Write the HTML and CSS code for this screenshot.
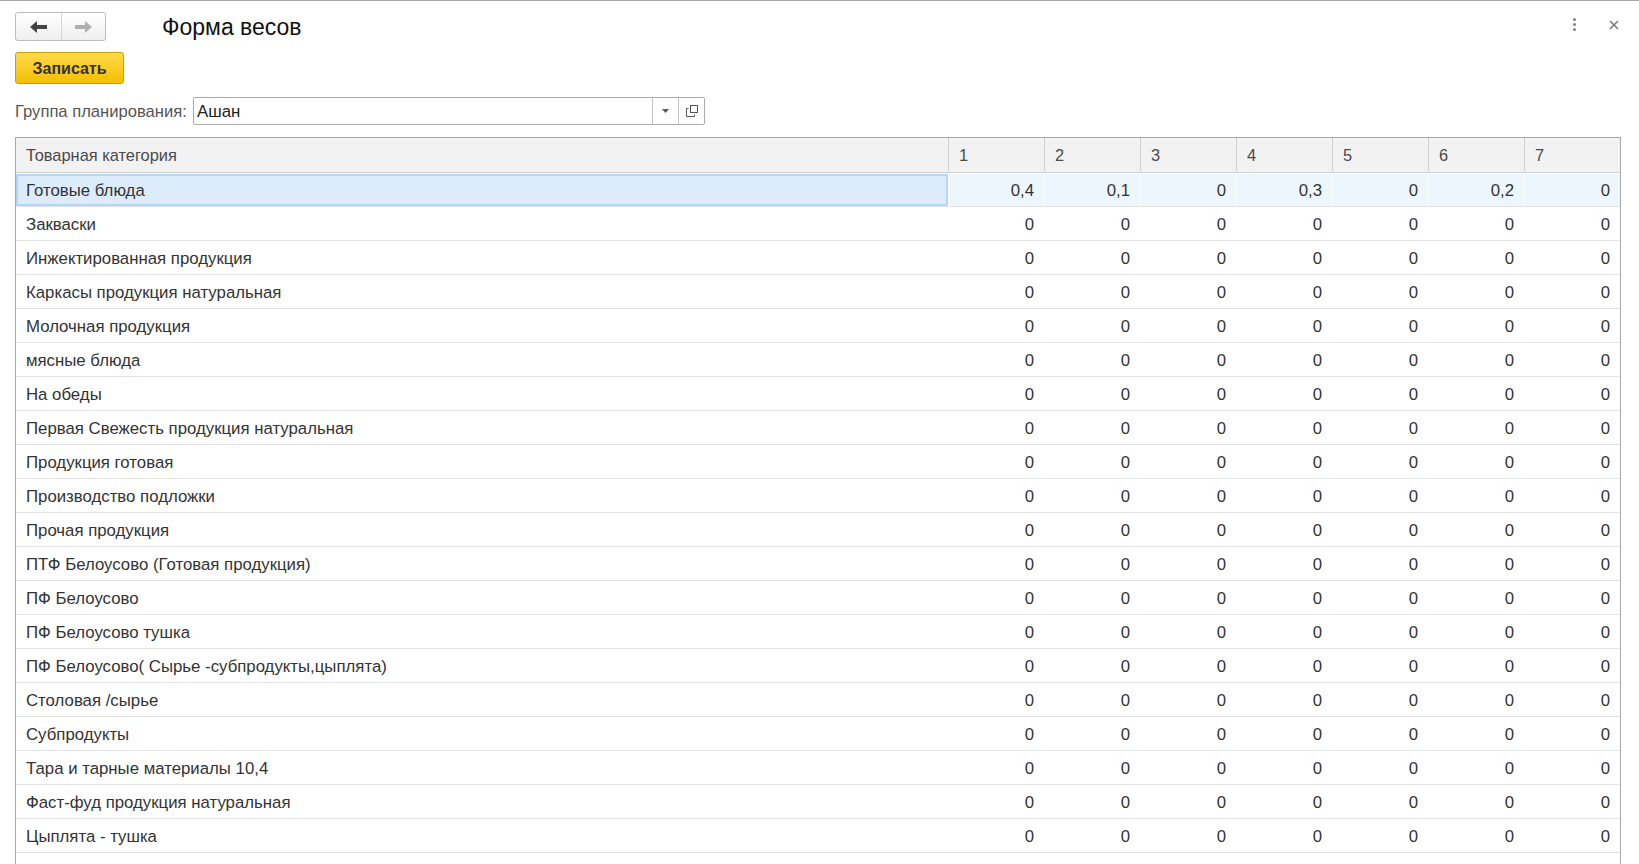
FILE: index.html
```html
<!DOCTYPE html>
<html lang="ru">
<head>
<meta charset="utf-8">
<title>Форма весов</title>
<link rel="stylesheet" href="styles.css">
</head>
<body>
<div class="window">
  <div class="titlebar">
    <div class="nav">
      <button class="nav-btn back" type="button">
        <svg width="17" height="12" viewBox="0 0 17 12"><polygon points="0,6 7,0 7,4 17,4 17,8 7,8 7,12" fill="#444"/></svg>
      </button>
      <button class="nav-btn fwd" type="button">
        <svg width="17" height="12" viewBox="0 0 17 12"><polygon points="17,6 10,0 10,4 0,4 0,8 10,8 10,12" fill="#b0b0b0"/></svg>
      </button>
    </div>
    <h1 class="title">Форма весов</h1>
    <div class="win-tools">
      <span class="kebab"><i></i><i></i><i></i></span>
      <svg class="close" width="10" height="10" viewBox="0 0 10 10"><path d="M1 1L9 9M9 1L1 9" stroke="#7a7a7a" stroke-width="1.6"/></svg>
    </div>
  </div>
  <div class="toolbar">
    <button class="save" type="button">Записать</button>
  </div>
  <div class="field-row">
    <span class="field-label">Группа планирования:</span>
    <div class="input">
      <span class="input-text">Ашан</span>
      <span class="input-btn drop"><svg width="7" height="4" viewBox="0 0 7 4"><polygon points="0,0 7,0 3.5,4" fill="#555"/></svg></span>
      <span class="input-btn open"><svg width="12" height="12" viewBox="0 0 12 12"><rect x="4.5" y="0.5" width="7" height="7" fill="none" stroke="#555"/><path d="M2.5 3.5H0.5V11.5H8.5V9.5" fill="none" stroke="#555"/></svg></span>
    </div>
  </div>
  <div class="grid">
    <table class="tbl">
      <colgroup><col class="c-name"><col class="c-num"><col class="c-num"><col class="c-num"><col class="c-num"><col class="c-num"><col class="c-num"><col class="c-num"></colgroup>
      <thead>
        <tr><th>Товарная категория</th><th>1</th><th>2</th><th>3</th><th>4</th><th>5</th><th>6</th><th>7</th></tr>
      </thead>
      <tbody>
        <tr class="sel"><td>Готовые блюда</td><td>0,4</td><td>0,1</td><td>0</td><td>0,3</td><td>0</td><td>0,2</td><td>0</td></tr>
        <tr><td>Закваски</td><td>0</td><td>0</td><td>0</td><td>0</td><td>0</td><td>0</td><td>0</td></tr>
        <tr><td>Инжектированная продукция</td><td>0</td><td>0</td><td>0</td><td>0</td><td>0</td><td>0</td><td>0</td></tr>
        <tr><td>Каркасы продукция натуральная</td><td>0</td><td>0</td><td>0</td><td>0</td><td>0</td><td>0</td><td>0</td></tr>
        <tr><td>Молочная продукция</td><td>0</td><td>0</td><td>0</td><td>0</td><td>0</td><td>0</td><td>0</td></tr>
        <tr><td>мясные блюда</td><td>0</td><td>0</td><td>0</td><td>0</td><td>0</td><td>0</td><td>0</td></tr>
        <tr><td>На обеды</td><td>0</td><td>0</td><td>0</td><td>0</td><td>0</td><td>0</td><td>0</td></tr>
        <tr><td>Первая Свежесть продукция натуральная</td><td>0</td><td>0</td><td>0</td><td>0</td><td>0</td><td>0</td><td>0</td></tr>
        <tr><td>Продукция готовая</td><td>0</td><td>0</td><td>0</td><td>0</td><td>0</td><td>0</td><td>0</td></tr>
        <tr><td>Производство подложки</td><td>0</td><td>0</td><td>0</td><td>0</td><td>0</td><td>0</td><td>0</td></tr>
        <tr><td>Прочая продукция</td><td>0</td><td>0</td><td>0</td><td>0</td><td>0</td><td>0</td><td>0</td></tr>
        <tr><td>ПТФ Белоусово (Готовая продукция)</td><td>0</td><td>0</td><td>0</td><td>0</td><td>0</td><td>0</td><td>0</td></tr>
        <tr><td>ПФ Белоусово</td><td>0</td><td>0</td><td>0</td><td>0</td><td>0</td><td>0</td><td>0</td></tr>
        <tr><td>ПФ Белоусово тушка</td><td>0</td><td>0</td><td>0</td><td>0</td><td>0</td><td>0</td><td>0</td></tr>
        <tr><td>ПФ Белоусово( Сырье -субпродукты,цыплята)</td><td>0</td><td>0</td><td>0</td><td>0</td><td>0</td><td>0</td><td>0</td></tr>
        <tr><td>Столовая /сырье</td><td>0</td><td>0</td><td>0</td><td>0</td><td>0</td><td>0</td><td>0</td></tr>
        <tr><td>Субпродукты</td><td>0</td><td>0</td><td>0</td><td>0</td><td>0</td><td>0</td><td>0</td></tr>
        <tr><td>Тара и тарные материалы 10,4</td><td>0</td><td>0</td><td>0</td><td>0</td><td>0</td><td>0</td><td>0</td></tr>
        <tr><td>Фаст-фуд продукция натуральная</td><td>0</td><td>0</td><td>0</td><td>0</td><td>0</td><td>0</td><td>0</td></tr>
        <tr><td>Цыплята - тушка</td><td>0</td><td>0</td><td>0</td><td>0</td><td>0</td><td>0</td><td>0</td></tr>
        <tr class="empty"><td></td><td></td><td></td><td></td><td></td><td></td><td></td><td></td></tr>
      </tbody>
    </table>
  </div>
</div>
</body>
</html>
```

FILE: styles.css
```css
* { box-sizing: border-box; }
html, body { margin: 0; padding: 0; height: 100%; overflow: hidden; background: #fff; }
body { font-family: "Liberation Sans", Arial, sans-serif; color: #333; font-size: 16.8px; }

.window { border-top: 1px solid #a8a8a8; height: 100%; }

.titlebar { height: 51px; display: flex; align-items: center; padding-left: 15px; padding-right: 20px; }
.nav { display: flex; height: 29px; border: 1px solid #bdbdbd; border-radius: 3px; background: linear-gradient(#ffffff, #efefef); overflow: hidden; }
.nav-btn { border: 0; background: transparent; padding: 0; margin: 0; display: flex; align-items: center; justify-content: center; height: 100%; }
.nav-btn.back { width: 46px; border-right: 1px solid #d6d6d6; }
.nav-btn.fwd { width: 43px; }
.title { margin: 0 0 0 56px; font-weight: normal; font-size: 23px; color: #111; flex: 1; padding-top: 1px; }
.win-tools { display: flex; align-items: center; gap: 33px; margin-top: -4px; }
.kebab { display: flex; flex-direction: column; gap: 2px; }
.kebab i { display: block; width: 3px; height: 3px; background: #808080; border-radius: 50%; }
.close { display: block; }

.toolbar { padding-left: 15px; height: 32px; display: flex; }
.save { width: 109px; height: 32px; border: 1px solid #c9a200; border-radius: 3px; background: linear-gradient(#ffd94d, #f4bf00); font-family: "Liberation Sans", Arial, sans-serif; font-weight: bold; font-size: 16px; color: #333; padding: 2px 0 0; }

.field-row { display: flex; align-items: center; margin-top: 13px; padding-left: 15px; height: 28px; }
.field-label { color: #555; font-size: 16.6px; width: 178px; white-space: nowrap; padding-top: 2px; }
.input { display: flex; width: 512px; height: 28px; border: 1px solid #ababab; border-radius: 2px; align-items: stretch; }
.input-text { flex: 1; padding: 2px 0 0 3px; display: flex; align-items: center; color: #222; }
.input-btn { width: 26px; display: flex; align-items: center; justify-content: center; border-left: 1px solid #c4c4c4; }

.grid { margin: 12px 0 0 15px; width: 1606px; border: 1px solid #a8a8a8; border-bottom: 0; height: 800px; }
.tbl { width: 1604px; table-layout: fixed; border-collapse: separate; border-spacing: 0; }
.c-name { width: 932px; }
.c-num { width: 96px; }
.tbl th { height: 35px; background: #f2f2f2; font-weight: normal; color: #4a4a4a; text-align: left; padding: 0 10px; border-bottom: 1px solid #cfcfcf; font-size: 16.4px; }
.tbl th + th { border-left: 1px solid #d2d2d2; }
.tbl td { height: 34px; padding: 2px 10px 0; border-bottom: 1px solid #e3e3e3; text-align: right; white-space: nowrap; color: #333; font-size: 16.8px; }
.tbl td:first-child { text-align: left; }
.tbl tr.sel td { background: #eef6fd; border-top: 1px solid #ffffff; height: 34px; }
.tbl tr.sel td + td { border-left: 1px solid #ffffff; }
.tbl tr.sel td:first-child { background: #dcecfb; box-shadow: inset 0 0 0 2px #b4d6f4; }
.tbl tr.empty td { border-bottom: 0; }
```
